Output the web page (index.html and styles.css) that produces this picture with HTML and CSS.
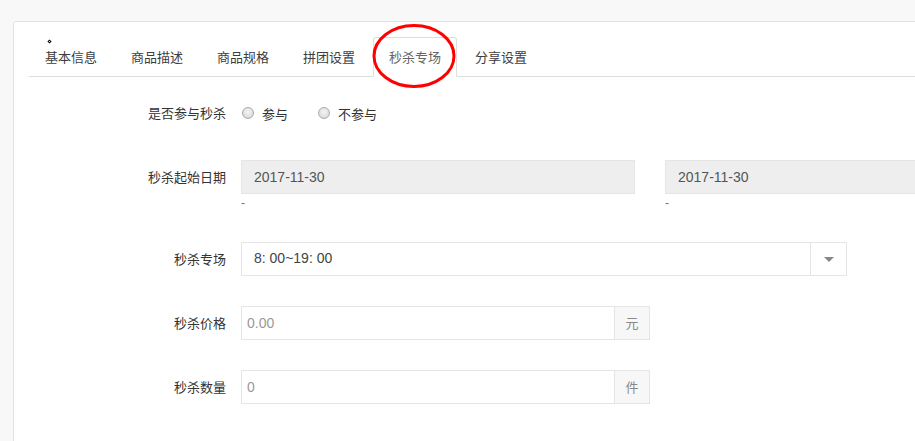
FILE: index.html
```html
<!DOCTYPE html>
<html lang="zh-CN">
  <head>
    <meta charset="utf-8" />
    <title>秒杀专场</title>
    <link rel="stylesheet" href="styles.css">
  </head>
  <body>
    <div class="panel">
      <ul class="nav-tabs">
        <li class="tab"><span class="dot"></span>基本信息</li>
        <li class="tab">商品描述</li>
        <li class="tab">商品规格</li>
        <li class="tab">拼团设置</li>
        <li class="tab active">
          秒杀专场
          <svg class="mark" width="86" height="66" viewBox="0 0 86 66">
            <ellipse cx="43" cy="33" rx="40" ry="30.5" fill="none" stroke="#f00" stroke-width="3" />
          </svg>
        </li>
        <li class="tab">分享设置</li>
      </ul>

      <form class="form">
        <div class="form-row">
          <label class="form-label">是否参与秒杀</label>
          <div class="radios">
            <label class="radio"><input type="radio" name="join" />参与</label>
            <label class="radio"><input type="radio" name="join" />不参与</label>
          </div>
        </div>

        <div class="form-row">
          <label class="form-label">秒杀起始日期</label>
          <div class="dates">
            <div>
              <input class="input readonly" type="text" value="2017-11-30" readonly />
              <div class="help">-</div>
            </div>
            <div>
              <input class="input readonly" type="text" value="2017-11-30" readonly />
              <div class="help">-</div>
            </div>
          </div>
        </div>

        <div class="form-row">
          <label class="form-label">秒杀专场</label>
          <div class="select">
            <span class="select-value">8: 00~19: 00</span>
            <span class="select-arrow"><i class="caret"></i></span>
          </div>
        </div>

        <div class="form-row">
          <label class="form-label">秒杀价格</label>
          <div class="input-group">
            <input class="input" type="text" placeholder="0.00" />
            <span class="addon">元</span>
          </div>
        </div>

        <div class="form-row">
          <label class="form-label">秒杀数量</label>
          <div class="input-group">
            <input class="input" type="text" placeholder="0" />
            <span class="addon">件</span>
          </div>
        </div>
      </form>
    </div>
  </body>
</html>
```

FILE: styles.css
```css
* {
  margin: 0;
  padding: 0;
  box-sizing: border-box;
}

html,
body {
  overflow: hidden;
}

body {
  font-family: "Liberation Sans", "Noto Sans CJK SC", sans-serif;
  font-size: 13px;
  color: #333;
  background: #f8f8f8;
  height: 441px;
}

.panel {
  margin: 21px -40px 0 13px;
  min-height: 460px;
  padding: 15px 15px 0;
  background: #fff;
  border: 1px solid #e2e2e2;
  border-radius: 3px 0 0 0;
}

/* tabs */
.nav-tabs {
  display: flex;
  list-style: none;
  border-bottom: 1px solid #ddd;
}

.tab {
  position: relative;
  margin-right: 2px;
  margin-bottom: -1px;
  padding: 10px 15px;
  line-height: 18px;
  color: #3d3d3d;
  border: 1px solid transparent;
  border-radius: 3px 3px 0 0;
  font-family: "Noto Sans CJK SC", sans-serif;
}

.tab.active {
  color: #666;
  background: #fff;
  border-color: #ddd #ddd transparent;
}

.dot {
  position: absolute;
  left: 18px;
  top: 2px;
  width: 3px;
  height: 3px;
  border: 1px solid #000;
  transform: rotate(45deg);
}

.mark {
  position: absolute;
  left: -3px;
  top: -15px;
}

/* form */
.form {
  padding-top: 19px;
}

.form-row {
  display: flex;
  align-items: flex-start;
  gap: 15px;
  margin-bottom: 30px;
}

.form-label {
  flex: 0 0 197px;
  text-align: right;
  line-height: 34px;
  font-family: "Noto Sans CJK SC", sans-serif;
  color: #333;
}

.radios {
  display: flex;
  gap: 30px;
  height: 34px;
  align-items: center;
  padding-left: 1px;
}

.radio {
  display: flex;
  align-items: center;
  gap: 8px;
  font-family: "Noto Sans CJK SC", sans-serif;
}

.radio input {
  appearance: none;
  width: 12px;
  height: 12px;
  border-radius: 50%;
  border: 1px solid #aaa;
  background: radial-gradient(circle at 50% 40%, #f4f4f4, #d4d4d4);
}

.dates {
  display: grid;
  grid-template-columns: 394px 394px;
  gap: 30px;
}

.input {
  display: block;
  width: 100%;
  height: 34px;
  padding: 6px 12px;
  border: 1px solid #e5e5e5;
  font-family: "Liberation Sans", "Noto Sans CJK SC", sans-serif;
  font-size: 14px;
  color: #555;
  outline: none;
  background: #fff;
}

.input::placeholder {
  color: #999;
}

.input-group .input {
  padding-left: 5px;
}

.input.readonly {
  background: #eee;
}

.help {
  height: 18px;
  line-height: 18px;
  font-size: 12px;
  color: #777;
}

.select {
  display: flex;
  width: 606px;
  height: 34px;
  border: 1px solid #e5e5e5;
}

.select-value {
  flex: 1;
  padding-left: 12px;
  line-height: 31px;
  font-size: 14px;
  color: #444;
}

.select-arrow {
  display: flex;
  align-items: center;
  justify-content: center;
  width: 36px;
  border-left: 1px solid #e5e5e5;
}

.caret {
  width: 0;
  height: 0;
  border-left: 5px solid transparent;
  border-right: 5px solid transparent;
  border-top: 5px solid #888;
}

.input-group {
  display: flex;
  width: 409px;
}

.input-group .input {
  border-right: 0;
}

.addon {
  flex: 0 0 36px;
  height: 34px;
  line-height: 32px;
  text-align: center;
  background: #f7f7f7;
  border: 1px solid #e5e5e5;
  color: #888;
  font-family: "Noto Sans CJK SC", sans-serif;
}
```
